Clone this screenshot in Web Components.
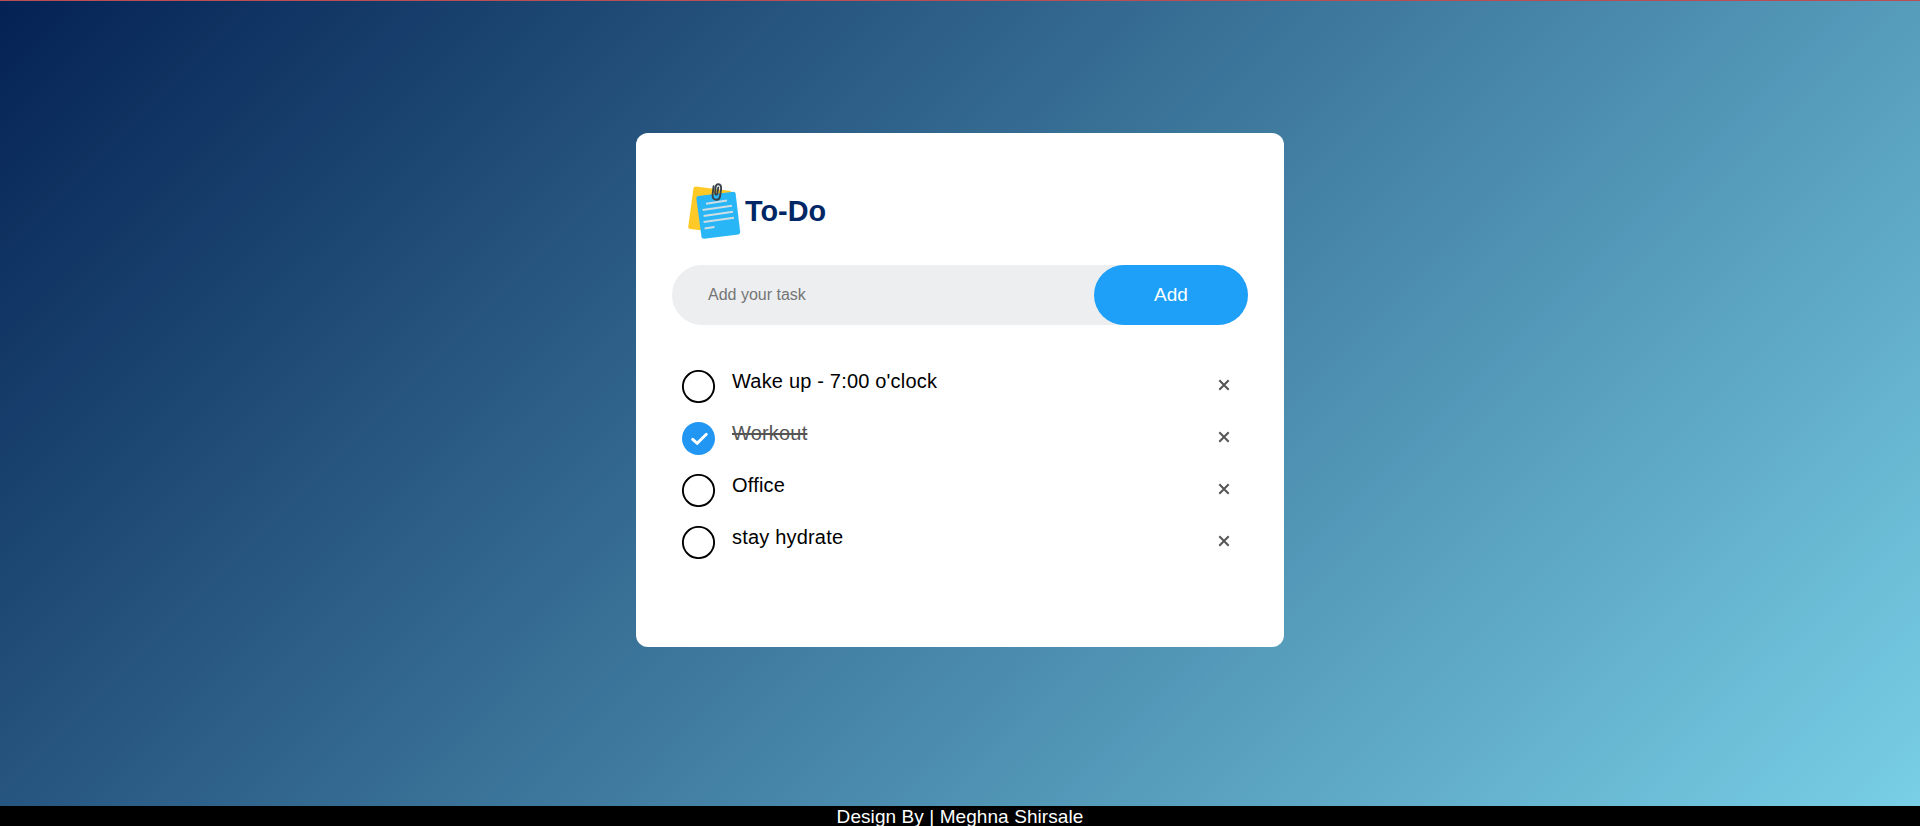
<!DOCTYPE html>
<html lang="en">
<head>
<meta charset="utf-8">
<title>To-Do</title>
<style>
html,body{margin:0;height:100%;overflow:hidden}
body{font-family:"Liberation Sans",Arial,sans-serif}
</style>
</head>
<body>
<todo-page>
  <todo-card>
    <todo-item>Wake up - 7:00 o'clock</todo-item>
    <todo-item checked>Workout</todo-item>
    <todo-item>Office</todo-item>
    <todo-item>stay hydrate</todo-item>
  </todo-card>
  <page-footer slot="footer">Design By | Meghna Shirsale</page-footer>
</todo-page>
<script>
const define = (name, html) => {
  const template = document.createElement('template');
  template.innerHTML = html;
  customElements.define(name, class extends HTMLElement {
    constructor() {
      super();
      this.attachShadow({ mode: 'open' }).append(template.content.cloneNode(true));
    }
  });
};

define('todo-page', `
<style>
:host{display:flex;flex-direction:column;height:100vh;box-sizing:border-box;border-top:1px solid #b94f55}
main{flex:1;min-height:0;box-sizing:border-box;padding-top:132px;background:linear-gradient(135deg,#042254,#78cfe6)}
</style>
<main><slot></slot></main><slot name="footer"></slot>`);

define('page-footer', `
<style>
:host{display:block;height:20px;line-height:21px;background:#000;color:#fff;font-size:19px;text-align:center;letter-spacing:.08px}
</style>
<slot></slot>`);

define('note-icon', `
<style>:host{display:block;width:54px;height:58px}svg{display:block}</style>
<svg width="54" height="58" viewBox="0 0 54 58" fill="none">
  <path d="M8 3.500 43 8 38 50 2 46Q0 45.500 .2 44L5.500 5Q6 3.300 8 3.500Z" fill="#ffca28"/>
  <path d="M10 13 45.500 8.800Q47.300 8.800 47.600 10.500L52.200 49Q52.200 51 50.500 51.400L16 55.800Q14 55.900 13.500 54L8.300 15Q8.200 13.400 10 13Z" fill="#29b6f6"/>
  <path d="M18 20.700 39 17.400M14.600 27.100 44 22.700M15.600 32.900 45 28.700M15.600 39 46 34.800M16.600 45.400 26.500 43.900" stroke="#cfdde4" stroke-width="2"/>
  <path d="M25.600 3.200 24.600 11.500Q24.200 16.500 28 16.700 31.500 16.900 32.100 13L33.100 6Q33.500 1.600 30.500 1.200 28 .9 27.600 4.300L27.100 10Q27.300 12.500 29.200 11.200L30.300 4.500" stroke="#37424a" stroke-width="1.900" stroke-linecap="round"/>
</svg>`);

define('task-entry', `
<style>
:host{display:flex;height:60px;border-radius:30px;background:#edeef0}
input{flex:1;min-width:0;border:0;outline:0;background:transparent;padding:0 0 0 36px;font:16px "Liberation Sans",Arial,sans-serif}
input::placeholder{color:#757575}
button{width:154px;border:0;border-radius:30px;background:#1e9ff8;color:#fff;padding:0;font:19px "Liberation Sans",Arial,sans-serif}
</style>
<input type="text" placeholder="Add your task"><button>Add</button>`);

define('todo-card', `
<style>
:host{display:block;box-sizing:border-box;width:648px;height:514px;margin:0 auto;padding:50px 36px 0;border-radius:12px;background:#fff}
header{display:flex;height:58px;margin:0 0 24px 16px}
h1{margin:0 0 0 3px;font-size:28.8px;line-height:56px;color:#002765}
section{padding-top:37px}
</style>
<header><note-icon></note-icon><h1>To-Do</h1></header>
<task-entry></task-entry>
<section><slot></slot></section>`);

define('todo-item', `
<style>
:host{display:flex;height:52px;font-size:20px;color:#000;letter-spacing:.19px}
svg{margin:8px 0 0 10px;flex:none}
.tick{display:none}
:host([checked]) .ring{display:none}
:host([checked]) .tick{display:block}
p{flex:1;margin:0 0 0 17px;line-height:38px}
:host([checked]) p{color:#555;text-decoration:line-through}
.x{margin:16px 17px 0 0}
</style>
<svg width="33" height="33" viewBox="0 0 33 33" fill="none">
  <circle class="ring" cx="16.500" cy="16.500" r="15.600" stroke="#000" stroke-width="1.900"/>
  <g class="tick"><circle cx="16.500" cy="16.500" r="16.500" fill="#2196f3"/><path d="M10.700 17.300 15.200 21.300 24.300 12.200" stroke="#fff" stroke-width="2.900" stroke-linecap="round"/></g>
</svg>
<p><slot></slot></p>
<svg class="x" width="14" height="14" viewBox="0 0 14 14"><path d="M2.300 2.300 11.700 11.700M11.700 2.300 2.300 11.700" stroke="#555" stroke-width="2"/></svg>`);
</script>
</body>
</html>
